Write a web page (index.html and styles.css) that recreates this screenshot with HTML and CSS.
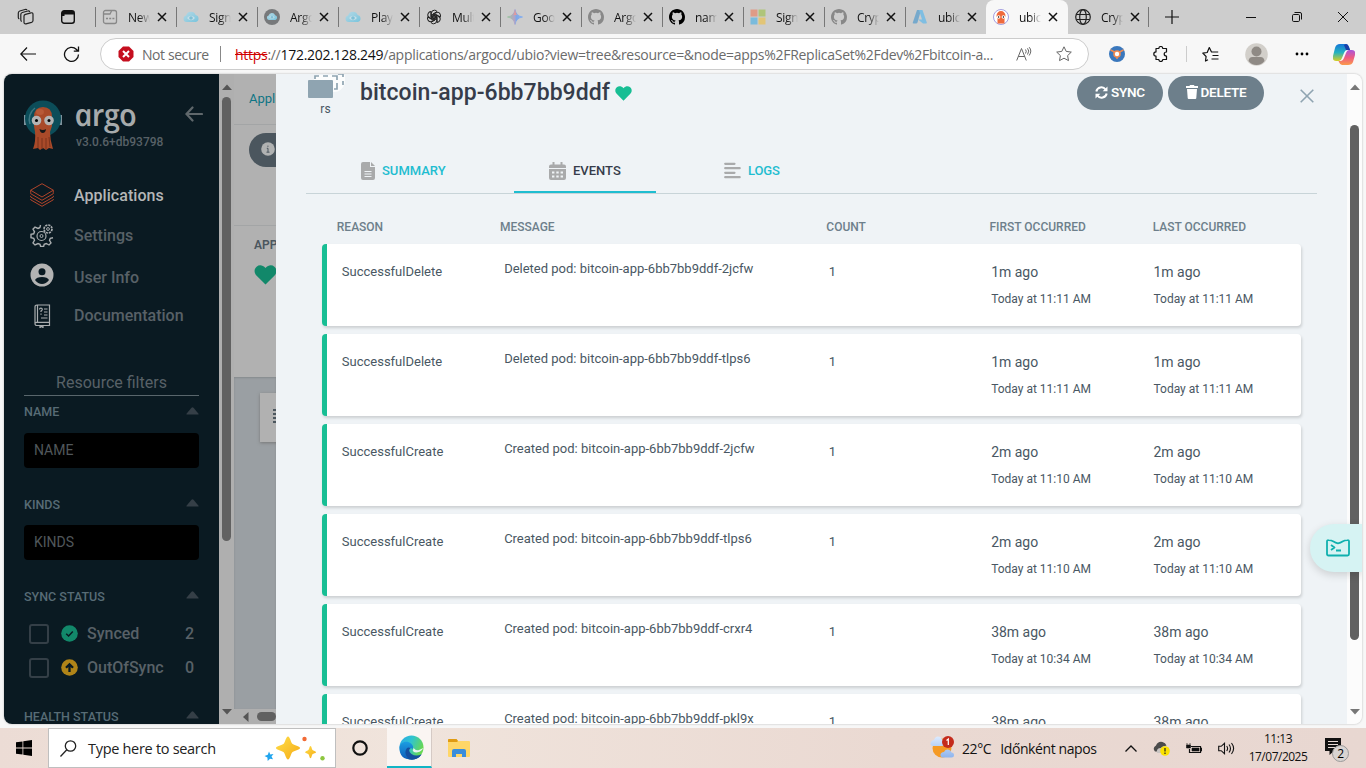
FILE: index.html
```html
<!DOCTYPE html>
<html lang="en">
<head>
<meta charset="utf-8">
<title>ubio - Argo CD</title>
<link rel="stylesheet" href="styles.css">
</head>
<body>
<svg class="defs" aria-hidden="true">
  <defs>
    <linearGradient id="cloudG" x1="0" y1="0" x2="1" y2="1"><stop offset="0" stop-color="#b5d9e6"/><stop offset="1" stop-color="#79c4dc"/></linearGradient>
    <linearGradient id="gem" x1="0" y1="0" x2="1" y2="0"><stop offset="0" stop-color="#9cc6a0"/><stop offset=".45" stop-color="#b3a4c4"/><stop offset=".6" stop-color="#7fa8e8"/><stop offset="1" stop-color="#88b0ee"/></linearGradient>
    <linearGradient id="star" x1="0" y1="0" x2="1" y2="1"><stop offset="0" stop-color="#ffdf4a"/><stop offset="1" stop-color="#f5ab16"/></linearGradient>
    <linearGradient id="edgeA" x1="0" y1="0" x2="1" y2=".4"><stop offset="0" stop-color="#2aa7e8"/><stop offset=".5" stop-color="#30c4cf"/><stop offset="1" stop-color="#67d852"/></linearGradient>
    <linearGradient id="edgeB" x1="0" y1="0" x2="0" y2="1"><stop offset="0" stop-color="#1b9de2"/><stop offset="1" stop-color="#0f5cb8"/></linearGradient>
    <linearGradient id="copA" x1="0" y1="0" x2="0" y2="1"><stop offset="0" stop-color="#1576d8"/><stop offset=".5" stop-color="#24b2c0"/><stop offset="1" stop-color="#d8cf22"/></linearGradient>
    <linearGradient id="copB" x1="0" y1="0" x2="0" y2="1"><stop offset="0" stop-color="#a855dc"/><stop offset=".5" stop-color="#ee5a83"/><stop offset="1" stop-color="#fb9b4a"/></linearGradient>
    <linearGradient id="cloudW" x1="0" y1="0" x2="0" y2="1"><stop offset="0" stop-color="#dcebff"/><stop offset="1" stop-color="#8fb5ee"/></linearGradient>
    <symbol id="x" viewBox="0 0 10 10"><path d="M1 1l8 8M9 1L1 9" stroke="#111" stroke-width="1.500" fill="none"/></symbol>
    <symbol id="cloud" viewBox="0 0 16 16"><path d="M3.500 13a3.300 3.300 0 0 1-.4-6.500A5 5 0 0 1 12.600 6a3.600 3.600 0 0 1 .3 7z" fill="url(#cloudG)"/><path d="M4 9q4-4.500 8 0q-4 4.500-8 0z" fill="#c5dfe8"/><circle cx="8" cy="9" r="1.800" fill="#7fc0d6"/></symbol>
    <symbol id="github" viewBox="0 0 16 16"><path d="M8 0C3.580 0 0 3.580 0 8c0 3.540 2.290 6.530 5.470 7.590.4.070.55-.17.55-.38 0-.19-.01-.82-.01-1.490-2.010.37-2.530-.49-2.690-.94-.09-.23-.48-.94-.82-1.130-.28-.15-.68-.52-.01-.53.63-.01 1.080.58 1.230.82.72 1.210 1.870.87 2.330.66.070-.52.28-.87.51-1.070-1.780-.2-3.640-.89-3.640-3.950 0-.87.31-1.590.82-2.150-.08-.2-.36-1.020.08-2.120 0 0 .67-.21 2.200.82a7.700 7.700 0 0 1 4 0c1.530-1.040 2.200-.82 2.200-.82.44 1.100.16 1.920.08 2.120.51.56.82 1.270.82 2.150 0 3.070-1.870 3.750-3.650 3.950.29.25.54.73.54 1.480 0 1.070-.01 1.930-.01 2.200 0 .21.15.46.55.38A8 8 0 0 0 16 8c0-4.420-3.580-8-8-8z"/></symbol>
    <symbol id="caret" viewBox="0 0 13 8"><path d="M1 7.500h11q1 0 .3-.9L7.500.8q-1-1-2 0L.7 6.600q-.7.900.3.900z"/></symbol>
    <symbol id="heart" viewBox="0 0 24 22"><path d="M12 21.500L2 11.500C-.8 8.500-.6 4 2.200 1.800 5-.4 9-.1 12 3.200c3-3.300 7-3.600 9.800-1.400C24.600 4 24.800 8.500 22 11.500z"/></symbol>
  </defs>
</svg>
<div class="browser">
  <div class="tabs">
    <div class="tabtools">
      <svg width="18" height="18" viewBox="0 0 18 18" fill="none" stroke="#222" stroke-width="1.200"><path d="M8.500 6.300l5.500-1.500q2-.3 2 1.600v6q0 1.500-1.500 2l-5.500 1.500q-2 .3-2-1.600V8q0-1.300 1.500-1.700z"/><path d="M4.800 13.500q-1-.3-1-1.500V6.500q0-1.500 1.500-2l5.500-1.500q1.500-.3 2 .9M2.300 11q-1-.4-1-1.500V5q0-1.500 1.500-2L8 1.500q1.500-.4 2 .6"/></svg>
      <svg width="16" height="16" viewBox="0 0 16 16"><rect x="1.700" y="1.700" width="12.600" height="12.600" rx="2.500" fill="none" stroke="#111" stroke-width="1.400"/><path d="M2 2h12v3.500H2zM2 5h2.500v2H2z" fill="#111"/></svg>
    </div>
    <div class="tab"><svg class="fav" viewBox="0 0 16 16" fill="none" stroke="#888" stroke-width="1.300"><rect x="1.500" y="1.500" width="13" height="13" rx="2"/><path d="M1.500 5H8l1.500-3M4 9.500h2M7.200 9.500h2M10.400 9.500h2"/></svg><span>New</span><svg class="close"><use href="#x"/></svg></div>
    <div class="tab"><svg class="fav"><use href="#cloud"/></svg><span>Sign</span><svg class="close"><use href="#x"/></svg></div>
    <div class="tab"><svg class="fav" viewBox="0 0 16 16"><circle cx="8" cy="8" r="8" fill="#77797b"/><svg x="2.500" y="2" width="11" height="11"><use href="#cloud"/></svg></svg><span>Argo</span><svg class="close"><use href="#x"/></svg></div>
    <div class="tab"><svg class="fav"><use href="#cloud"/></svg><span>Play</span><svg class="close"><use href="#x"/></svg></div>
    <div class="tab"><svg class="fav" viewBox="0 0 16 16" fill="none" stroke="#222" stroke-width="1"><path id="petal" d="M5.400 9.500V4.200Q5.400 1.200 8.400 1.200q1.700 0 2.700 1.400L6.900 5v4.800"/><use href="#petal" transform="rotate(60 8 8)"/><use href="#petal" transform="rotate(120 8 8)"/><use href="#petal" transform="rotate(180 8 8)"/><use href="#petal" transform="rotate(240 8 8)"/><use href="#petal" transform="rotate(300 8 8)"/></svg><span>Mult</span><svg class="close"><use href="#x"/></svg></div>
    <div class="tab"><svg class="fav" viewBox="0 0 16 16"><path d="M8 .5Q9 7 15.500 8 9 9 8 15.500 7 9 .5 8 7 7 8 .5z" fill="url(#gem)" stroke="url(#gem)"/><path d="M8 .5Q8.500 4 10 6L6.500 6Q7.700 4 8 .5z" fill="#e39a9a"/></svg><span>Goo</span><svg class="close"><use href="#x"/></svg></div>
    <div class="tab"><svg class="fav grey"><use href="#github"/></svg><span>Argo</span><svg class="close"><use href="#x"/></svg></div>
    <div class="tab"><svg class="fav"><use href="#github"/></svg><span>nam</span><svg class="close"><use href="#x"/></svg></div>
    <div class="tab"><svg class="fav" viewBox="0 0 16 16"><path fill="#df9b86" d="M.5.500h7v7h-7z"/><path fill="#afc57a" d="M8.500.5h7v7h-7z"/><path fill="#7abbdc" d="M.5 8.500h7v7h-7z"/><path fill="#e2c577" d="M8.500 8.500h7v7h-7z"/></svg><span>Sign</span><svg class="close"><use href="#x"/></svg></div>
    <div class="tab"><svg class="fav grey"><use href="#github"/></svg><span>Cryp</span><svg class="close"><use href="#x"/></svg></div>
    <div class="tab"><svg class="fav" viewBox="0 0 16 16"><path d="M5 1h4L5.500 13.500q-.4 1-1.500 1H1.500q-1 0-.7-1z" fill="#76a9cc"/><path d="M7 1h3.500l4.300 12.500q.3 1-.7 1H11L6 10.500h4z" fill="#7fbee2"/></svg><span>ubic</span><svg class="close"><use href="#x"/></svg></div>
    <div class="tab active"><svg class="fav" viewBox="0 0 16 16"><circle cx="8" cy="8" r="7.500" fill="#fff" stroke="#8d86d8" stroke-width=".8"/><path d="M3.500 7a4.500 5 0 0 1 9 0l-1 3v4.500h-7V10z" fill="#ef6a3c"/><circle cx="5.600" cy="8" r="1.800" fill="#fff"/><circle cx="10.400" cy="8" r="1.800" fill="#fff"/><circle cx="5.600" cy="8" r=".7"/><circle cx="10.400" cy="8" r=".7"/></svg><span>ubic</span><svg class="close"><use href="#x"/></svg></div>
    <div class="tab"><svg class="fav" viewBox="0 0 16 16" fill="none" stroke="#222" stroke-width="1.200"><circle cx="8" cy="8" r="7.300"/><ellipse cx="8" cy="8" rx="3.300" ry="7.300"/><path d="M1.500 5.500h13M1.500 10.500h13"/></svg><span>Cryp</span><svg class="close"><use href="#x"/></svg></div>
    <svg class="plus" width="14" height="14" viewBox="0 0 14 14"><path d="M7 0v14M0 7h14" stroke="#111" stroke-width="1.200"/></svg>
    <div class="winbtns">
      <svg width="10" height="10" viewBox="0 0 10 10"><path d="M0 5.500h10" stroke="#111"/></svg>
      <svg width="10" height="10" viewBox="0 0 10 10" fill="none" stroke="#111"><rect x=".5" y="2.500" width="7" height="7" rx="1.200"/><path d="M2.500.5H8q1.500 0 1.500 1.500v5.500"/></svg>
      <svg width="10" height="10" viewBox="0 0 10 10"><path d="M0 0l10 10M10 0L0 10" stroke="#111"/></svg>
    </div>
  </div>
  <div class="toolbar">
    <svg class="back" width="16" height="14" viewBox="0 0 16 14" fill="none" stroke="#111" stroke-width="1.200"><path d="M7 .5L.8 7 7 13.500M.8 7H16"/></svg>
    <svg class="reload" width="17" height="17" viewBox="0 0 17 17" fill="none" stroke="#111" stroke-width="1.300"><path d="M15.500 8.500a7 7 0 1 1-2-5l1.500 1.500M15.500 .5v4.700h-4.700"/></svg>
    <div class="address">
      <svg width="16" height="16" viewBox="0 0 16 16"><path d="M5 .5h6L15.500 5v6L11 15.500H5L.5 11V5z" fill="#c50f1f"/><path d="M5 5l6 6M11 5l-6 6" stroke="#fff" stroke-width="2"/></svg>
      <span class="notsec">Not secure</span><i class="vsep"></i>
      <span class="url"><s>https</s>://<b>172.202.128.249</b>/applications/argocd/ubio?view=tree&amp;resource=&amp;node=apps%2FReplicaSet%2Fdev%2Fbitcoin-a...</span>
      <svg class="read" width="16" height="14" viewBox="0 0 16 14" fill="none" stroke="#666"><path d="M.7 13.500L5.500 1.500l4.800 12M2.300 9.500h6.400M9.500 2.500q1.500 1.500 0 4M11.500 1.300q2.500 2.500 0 6.200M13.200.2q3.200 3.600 0 8.300"/></svg>
      <svg width="16" height="16" viewBox="0 0 16 16" fill="none" stroke="#666"><path d="M8 .8l2.200 4.600 5.100.7-3.700 3.500.9 5L8 12.200l-4.500 2.400.9-5L.7 6.100l5.100-.7z" stroke-linejoin="round"/></svg>
    </div>
    <div class="tools">
      <svg width="16" height="16" viewBox="0 0 16 16"><circle cx="8" cy="8" r="8" fill="#3a78bd"/><path d="M1.500 4l5 2.500M14.500 4l-5 2.500M8 10.500V13" stroke="#f08a50" stroke-width="1.500"/><circle cx="8" cy="8" r="3.800" fill="#f08a50"/><circle cx="8" cy="8" r="2.200" fill="#fff"/></svg>
      <svg width="16" height="16" viewBox="0 0 16 16" fill="none" stroke="#111" stroke-width="1.200"><path d="M3 2.500h2.800q.2-2 2-2t2 2h3.700V6q-2.300 0-2.300 2t2.300 2v3.500h-3.700q-.2 2-2 2t-2-2H3v-3.300Q.8 10 .8 8T3 5.900z" stroke-linejoin="round"/></svg>
      <i class="vsep light"></i>
      <svg width="17" height="16" viewBox="0 0 17 16" fill="none" stroke="#111" stroke-width="1.200"><path d="M6 13.800L3.500 15l.6-4.500L.8 7.200l4.400-.7L7.300 1.500 9.500 6h6.700M10.500 9.500h6M9.500 13h7" stroke-linejoin="round"/></svg>
      <svg width="23" height="23" viewBox="0 0 23 23"><circle cx="11.500" cy="11.500" r="11.300" fill="#d2cfca"/><circle cx="11.500" cy="8.500" r="5" fill="#8f8a85"/><path d="M3.500 18q.5-4 4-4h8q3.500 0 4 4-3 4-8 4t-8-4z" fill="#8f8a85"/></svg>
      <svg width="14" height="4" viewBox="0 0 14 4"><circle cx="2" cy="2" r="1.400"/><circle cx="7" cy="2" r="1.400"/><circle cx="12" cy="2" r="1.400"/></svg>
      <svg width="22" height="21" viewBox="0 0 22 21"><path d="M7 0h6q2 0 3 3l1 3h-3q-2 0-3 3l-2 5q-1 3-3 3H3q-4 0-3-5l2-8Q3 0 7 0z" fill="url(#copA)"/><path d="M13 0q2 0 3 3l1 3h-4L11 1z" fill="#193fa8"/><path d="M15 21H9q-2 0-3-3l-.5-1H8q2 0 3-3l2-5q1-3 3-3h3q4 0 3 5l-2 7q-1 3-5 3z" fill="url(#copB)"/></svg>
    </div>
  </div>

  <div class="viewport">
    <aside class="sidebar">
      <header class="brand">
        <svg class="octo" width="38" height="51" viewBox="0 0 38 51"><path d="M0 15h3v10H0zM35 15h3v10h-3z" fill="#7e929c"/><circle cx="19" cy="18.500" r="18" fill="#0c4d59"/><path d="M6 24a14 14 0 0 1 5-16" fill="none" stroke="#3d7681" stroke-width="1.500"/><path d="M10 17q0-10 9-10t9 10v9l-2 6q0 8 3 17l-4-1-3 2-3-2-3 2-2-2-5 1q3-8 2-17l-1-6z" fill="#a94a29"/><path d="M14 37v11M18 38v11M22 38v11M25 37l1 10" stroke="#7d331c" stroke-width="1"/><ellipse cx="16" cy="12" rx="4" ry="3" fill="#b85a38"/><circle cx="12.500" cy="20.500" r="4.800" fill="#b3b3b3"/><circle cx="25" cy="20.500" r="4.800" fill="#b3b3b3"/><circle cx="12.500" cy="20.500" r="1.500"/><circle cx="25" cy="20.500" r="1.500"/><path d="M15.500 29q3.500 2 6.500 0-.5 4-3.200 4t-3.300-4z" fill="#181818"/></svg>
        <div class="brandtext"><div class="argo">argo</div><div class="ver">v3.0.6+db93798</div></div>
        <svg class="collapse" width="18" height="16" viewBox="0 0 18 16" fill="none" stroke="#5f676b" stroke-width="2.200" stroke-linecap="round"><path d="M7.500 1.500L1.500 8l6 6.500M2 8h15"/></svg>
      </header>
      <nav>
        <a class="on n1"><svg width="24" height="24" viewBox="0 0 24 24" fill="none" stroke="#b0452b" stroke-width="1"><path d="M12 .7l11.300 6.500L12 14 .7 7.200zM.7 9.500v1.200L12 17.300l11.300-6.600V9.500M.7 12.800v1.200L12 20.500l11.300-6.500v-1.200M.7 16v.8L12 23.300l11.300-6.500V16M.7 7.200v2.300M23.300 7.200v2.300"/></svg>Applications</a>
        <a class="n2"><svg width="24" height="24" viewBox="0 0 24 24" fill="none" stroke="#a9adaf" stroke-width="1.400"><path d="M10 4.500l.5-2.500M10 4.500l-2 1-3-1.500L3 6.200l1.500 2.600-.8 2-2.700.5v3.400l2.700.6.8 2L3 20l2 2 3-1.500 2 .8.600 2.200h3l.6-2.200 2-.8L19 22l2-2-1.500-2.700.8-2 2.700-.6"/><circle cx="11.500" cy="13" r="4.500" stroke-width="1.200"/><circle cx="11.500" cy="13" r="1.500" stroke-width="1"/><circle cx="18" cy="6" r="4" stroke-dasharray="2.200 .9" stroke-width="1.700"/><circle cx="18" cy="6" r="1.400" stroke-width="1"/></svg>Settings</a>
        <a class="n3"><svg width="24" height="24" viewBox="0 0 24 24"><circle cx="12" cy="12" r="11.500" fill="#b3b3b3"/><circle cx="12" cy="8.800" r="3.500" fill="#0a1a22"/><path d="M5 17q1.500-3 7-3t7 3q-3 4-7 4t-7-4z" fill="#0a1a22"/></svg>User Info</a>
        <a class="n4"><svg width="24" height="24" viewBox="0 0 24 24" fill="none" stroke="#a9adaf" stroke-width="1.200"><path d="M5 3q0-2 2-2h12.500v20.500H7q-2 0-2-1.800V3M5 19.500q0-1.200 1.500-1.200h13M7.500 1v17M10 21v2.500l1.500-1 1.500 1V21M14 5h3.500M14 8h3.500M14 11h3.500M11 14h6.500"/><path d="M9.500 5.500q0-1.300 1.400-1.300T12.300 5.600q0 .8-1.300 1.400v1M11 9.500v1.200"/></svg>Documentation</a>
      </nav>
      <div class="rf">Resource filters</div>
      <div class="fh f1">NAME<svg><use href="#caret"/></svg></div>
      <div class="inp">NAME</div>
      <div class="fh f2">KINDS<svg><use href="#caret"/></svg></div>
      <div class="inp">KINDS</div>
      <div class="fh f3">SYNC STATUS<svg><use href="#caret"/></svg></div>
      <div class="chk"><i></i><svg width="17" height="17" viewBox="0 0 17 17"><circle cx="8.500" cy="8.500" r="8.300" fill="#12886a"/><path d="M5.200 8.700l2.400 2.300 4.200-4.500" fill="none" stroke="#0a1a22" stroke-width="1.500"/></svg><span>Synced</span><b>2</b></div>
      <div class="chk"><i></i><svg width="17" height="17" viewBox="0 0 17 17"><circle cx="8.500" cy="8.500" r="8.300" fill="#b08418"/><path d="M8.500 13v-7.500M5 8.800l3.500-3.500L12 8.800" fill="none" stroke="#0a1a22" stroke-width="2.300"/></svg><span>OutOfSync</span><b>0</b></div>
      <div class="fh f4">HEALTH STATUS<svg><use href="#caret"/></svg></div>
    </aside>
    <div class="sb left"><svg width="10" height="6" viewBox="0 0 10 6"><path d="M0 6l5-5.500L10 6z"/></svg><i></i><svg class="dn" width="10" height="6" viewBox="0 0 10 6"><path d="M0 0l5 5.500L10 0z"/></svg></div>
    <main class="under">
      <div class="crumb">Appli</div>
      <div class="bar"><div class="pill"><svg width="14" height="14" viewBox="0 0 14 14"><circle cx="7" cy="7" r="6.800" fill="#b0b2b2"/><path d="M5.800 6.300H7v3.700M5.500 10.200h3M6.300 4.200h1.200" stroke="#4b565e" stroke-width="1" fill="none"/></svg></div></div>
      <div class="health"><span>APP</span><svg width="23" height="20"><use href="#heart"/></svg></div>
      <div class="tree"><div class="box"><i></i><i></i><i></i><i></i></div></div>
      <div class="hsb"><svg width="6" height="10" viewBox="0 0 6 10"><path d="M5.500 0v10L0 5z" fill="#555"/></svg><i></i></div>
    </main>
    <section class="panel">
      <div class="titlebar">
        <div class="kind"><svg width="37" height="24" viewBox="0 0 37 24"><path d="M6 1h31v8q-3 9-11 9H6z" fill="#fff" opacity=".8"/><path d="M7 5V2h4M15 2h5M24 2h5v4M29 9v6h-3M30 0h5v3M35 7v4" fill="none" stroke="#8fa4b1" stroke-width="1.700"/><rect y="6" width="25" height="18" rx="1" fill="#8fa4b1"/></svg><span>rs</span></div>
        <h1>bitcoin-app-6bb7bb9ddf</h1><svg class="hh" width="17" height="15"><use href="#heart"/></svg>
        <div class="btns">
          <button class="sync"><svg width="13" height="13" viewBox="0 0 13 13" fill="none" stroke="#fff" stroke-width="2"><path d="M1.300 5.500A5.200 5.200 0 0 1 10.600 3.500M11.700 7.500A5.200 5.200 0 0 1 2.400 9.500"/><path d="M12.500.5v4.800H7.700zM.5 12.500V7.700h4.800z" fill="#fff" stroke="none"/></svg>SYNC</button>
          <button class="del"><svg width="12" height="14" viewBox="0 0 12 14" fill="#fff"><path d="M0 1h3.500L4 0h4l.5 1H12v2H0zM1 4h10l-.7 9q0 1-1 1H2.700q-1 0-1-1z"/></svg>DELETE</button>
        </div>
        <svg class="xx" width="14" height="14" viewBox="0 0 14 14"><path d="M.7.7l12.600 12.600M13.300.7L.7 13.300" stroke="#8fa4b1" stroke-width="1.600"/></svg>
      </div>
      <div class="ptabs">
        <a class="p1"><svg width="14" height="18" viewBox="0 0 14 18"><path d="M2 0h7v5h5v11q0 2-2 2H2q-2 0-2-2V2q0-2 2-2zM10 0l4 4h-4z" fill="#a9aaab"/><path d="M3.500 9.500h7M3.500 12h7M3.500 14.500h7" stroke="#eff3f6"/></svg>SUMMARY</a>
        <a class="p2"><svg width="17" height="18" viewBox="0 0 17 18"><path d="M3.500 0h2v2.500h6V0h2v2.500H15q2 0 2 2V6H0V4.500q0-2 2-2h1.500zM0 7h17v9q0 2-2 2H2q-2 0-2-2z" fill="#a9aaab"/><path d="M3 9.500h2.400v2H3zM7.300 9.500h2.400v2H7.300zM11.600 9.500H14v2h-2.400zM3 13.500h2.400v2H3zM7.300 13.500h2.400v2H7.300zM11.600 13.500H14v2h-2.400z" fill="#eff3f6"/></svg>EVENTS</a>
        <a class="p3"><svg width="17" height="17" viewBox="0 0 17 17"><path d="M1.200 1.800h9.300M1.200 6.200h14.500M1.200 10.800h9.300M1.200 15.200h14.500" stroke="#a9aaab" stroke-width="2.200" stroke-linecap="round"/></svg>LOGS</a>
      </div>
      <div class="table">
        <div class="row head"><span>REASON</span><span>MESSAGE</span><span>COUNT</span><span>FIRST OCCURRED</span><span>LAST OCCURRED</span></div>
        <div class="row card"><span class="r">SuccessfulDelete</span><span class="m">Deleted pod: bitcoin-app-6bb7bb9ddf-2jcfw</span><span class="r">1</span><span class="t">1m ago<small>Today at 11:11 AM</small></span><span class="t">1m ago<small>Today at 11:11 AM</small></span></div>
        <div class="row card"><span class="r">SuccessfulDelete</span><span class="m">Deleted pod: bitcoin-app-6bb7bb9ddf-tlps6</span><span class="r">1</span><span class="t">1m ago<small>Today at 11:11 AM</small></span><span class="t">1m ago<small>Today at 11:11 AM</small></span></div>
        <div class="row card"><span class="r">SuccessfulCreate</span><span class="m">Created pod: bitcoin-app-6bb7bb9ddf-2jcfw</span><span class="r">1</span><span class="t">2m ago<small>Today at 11:10 AM</small></span><span class="t">2m ago<small>Today at 11:10 AM</small></span></div>
        <div class="row card"><span class="r">SuccessfulCreate</span><span class="m">Created pod: bitcoin-app-6bb7bb9ddf-tlps6</span><span class="r">1</span><span class="t">2m ago<small>Today at 11:10 AM</small></span><span class="t">2m ago<small>Today at 11:10 AM</small></span></div>
        <div class="row card"><span class="r">SuccessfulCreate</span><span class="m">Created pod: bitcoin-app-6bb7bb9ddf-crxr4</span><span class="r">1</span><span class="t">38m ago<small>Today at 10:34 AM</small></span><span class="t">38m ago<small>Today at 10:34 AM</small></span></div>
        <div class="row card"><span class="r">SuccessfulCreate</span><span class="m">Created pod: bitcoin-app-6bb7bb9ddf-pkl9x</span><span class="r">1</span><span class="t">38m ago</span><span class="t">38m ago</span></div>
      </div>
    </section>
    <div class="sb right"><svg width="10" height="6" viewBox="0 0 10 6"><path d="M0 6l5-5.500L10 6z"/></svg><i></i><svg class="dn" width="10" height="6" viewBox="0 0 10 6"><path d="M0 0l5 5.500L10 0z"/></svg></div>
    <div class="float"><svg width="24" height="18" viewBox="0 0 24 18" fill="none" stroke="#0fb0ae" stroke-width="1.800" stroke-linejoin="round"><path d="M1 2.500Q1 1 2.500 1.200q3 .1 5 1.400t4.500 1.700q2.500-.4 4.500-1.700t5-1.400Q23 1 23 2.500v12.500q0 1.500-1.500 1.500h-19Q1 16.500 1 15zM5 6l3.500 2.500L5 11M10 11.500h5"/></svg></div>
  </div>

  <footer class="taskbar">
    <div class="start"><svg width="16" height="16" viewBox="0 0 16 16"><path d="M0 2.300l6.500-.9v6.100H0zM7.300 1.300L16 0v7.500H7.300zM0 8.400h6.500v6.200L0 13.700zM7.300 8.400H16V16l-8.700-1.300z"/></svg></div>
    <div class="search">
      <svg width="17" height="17" viewBox="0 0 17 17" fill="none" stroke="#222" stroke-width="1.300"><circle cx="10.500" cy="6" r="5.200"/><path d="M6.800 9.800L.5 16.500"/></svg>
      <span>Type here to search</span>
      <svg class="stars" width="62" height="25" viewBox="0 0 62 25"><path d="M24 .5c2 0 2.800 5.700 4.300 7.200s7.700 2.300 7.700 4.300-6.200 2.800-7.700 4.300S26 23.500 24 23.500s-2.800-5.700-4.300-7.200S12 14 12 12s6.200-2.800 7.700-4.300S22 .5 24 .5z" fill="url(#star)"/><path d="M46.500 10c1 0 1.300 3.200 2 4s3.500 1.200 3.500 2.200-2.800 1.300-3.500 2-1 4-2 4-1.300-3.200-2-4-3.500-1.200-3.500-2 2.800-1.400 3.500-2.200 1-4 2-4z" fill="url(#star)"/><path d="M5 15.500l1.300 3 3.200-.5-2 2.500 1.500 2.800-3-.6-2.300 2.300-.3-3.500L.5 20l3.300-1.200z" fill="#21a5ee"/><circle cx="40.500" cy="3" r="2.200" fill="#f26a35"/><circle cx="58.500" cy="22.300" r="2.200" fill="#8dc63f"/></svg>
    </div>
    <div class="cort"><svg width="16" height="16" viewBox="0 0 16 16"><circle cx="8" cy="8" r="6.700" fill="none" stroke="#111" stroke-width="2.200"/></svg></div>
    <div class="edge"><svg width="25" height="25" viewBox="0 0 25 25"><circle cx="12.500" cy="12.500" r="12" fill="url(#edgeA)"/><path d="M.5 13C.5 7 8 5 12 8.500 14 10 14.500 12 14 14c-3-2-6 1-4 5 2 3.500 8 4 12.500.5Q19 24.500 12.500 24.500.5 24.500.5 13z" fill="url(#edgeB)"/><path d="M8 13q-4 5 2 11.300Q18 26 22.700 19.200 17 22 12.500 19q-4-3-1-6-2-1-3.500 0z" fill="#154f9f"/><path d="M13.800 12.500q1.500 1-.1 3 .8 2.500 5 1.800 4-.7 5.600-4.300L20 15q-3 1-6.200-2.500z" fill="#e9f3f3"/></svg></div>
    <div class="files"><svg width="22" height="19" viewBox="0 0 22 19"><path d="M0 1q0-1 1-1h7.500l1.500 2H21q1 0 1 1v14q0 1-1 1H1q-1 0-1-1z" fill="#ffd667"/><path d="M0 1q0-1 1-1h7.500l1.500 2-1 1H0z" fill="#e09b12"/><path d="M4 18v-6q0-2 2-2h10q2 0 2 2v6h-4v-3H8v3z" fill="#3a8ddb"/></svg></div>
    <div class="weather"><svg width="26" height="24" viewBox="0 0 26 24"><circle cx="12" cy="12" r="9.500" fill="#f59a25"/><path d="M3 10q-3-.5-2.500-3.500Q1.500 4 4 4q1-3.500 4-3.500t4 3q2.500 0 2.500 3T12 10zM13 21.500q-3-.5-2.500-3T14 16q1-3 4-2.500t3.500 3q2.500 0 2.500 2.500t-2.500 2.500z" fill="url(#cloudW)"/><circle cx="18" cy="6" r="6" fill="#c42b1c"/><path d="M16.500 4.500L18.300 3v6" stroke="#fff" stroke-width="1.200" fill="none"/></svg><span>22°C</span><span>Időnként napos</span></div>
    <div class="tray">
      <svg width="12" height="7" viewBox="0 0 12 7"><path d="M.5 6.500L6 1l5.500 5.500" fill="none" stroke="#111" stroke-width="1.300"/></svg>
      <svg width="17" height="15" viewBox="0 0 17 15"><path d="M2 10.500Q-1 7 3 4.500 5 0 9.500 1q3 .5 4 3.500l-4 1.500-4 4.500z" fill="#4b4b4b"/><path d="M4 12q-1-5 4-5 2-3 5-1l2 3-4 3z" fill="#c9c5c3"/><circle cx="12" cy="10" r="4.800" fill="#fbe200"/><path d="M12 7v3.500M12 11.500v1.500" stroke="#222" stroke-width="1.200"/></svg>
      <svg width="16" height="11" viewBox="0 0 16 11"><path d="M5 3.500h9.500v6h-11V6" fill="none" stroke="#111" stroke-width="1.200"/><path d="M6 5h7v3H6zM15 5h1v3h-1zM.5 2h4v3h-4zM1 0v2M4 0v2" fill="#111" stroke="#111" stroke-width=".6"/></svg>
      <svg width="17" height="13" viewBox="0 0 17 13" fill="none" stroke="#111" stroke-width="1.100"><path d="M.7 4.300h2.500L6.500 1.300v10.400L3.200 8.700H.7zM8.700 4q1.800 2.500 0 5M11 2.500q3 4 0 8M13.500 1q4.200 5.500 0 11"/></svg>
    </div>
    <div class="clock"><span>11:13</span><span>17/07/2025</span></div>
    <div class="notif"><svg width="25" height="24" viewBox="0 0 25 24"><path d="M0 0h16v13H9l-4.500 4v-4H0z" fill="#111"/><path d="M3 3.500h10M3 6.500h10M3 9.500h8" stroke="#e7d9d4" stroke-width="1.200"/><circle cx="15.500" cy="15.500" r="8" fill="#d9d4d2" stroke="#999"/><text x="12.200" y="19.800" class="ntext">2</text></svg></div>
  </footer>
</div>
</body>
</html>
```
FILE: styles.css
```css
* { box-sizing: border-box; }
body { margin: 0; font-family: Roboto, "Liberation Sans", sans-serif; overflow: hidden; }
.defs { position: absolute; width: 0; height: 0; }
svg { flex: none; display: block; }
.browser { width: 1366px; height: 768px; background: #f7f7f7; display: flex; flex-direction: column; overflow: hidden; }

/* tab strip */
.tabs { height: 34px; background: #cdcdcd; display: flex; align-items: center; font: 12px "Open Sans", sans-serif; color: #111; flex: none; }
.tabtools { width: 95px; padding-left: 17px; display: flex; gap: 25px; align-items: center; flex: none; }
.tab { width: 81px; height: 34px; padding-left: 7px; display: flex; align-items: center; flex: none; background: linear-gradient(#777, #777) 0 7px / 1px 20px no-repeat; }
.tab span { margin-left: 10px; width: 22px; letter-spacing: -.3px; overflow: hidden; white-space: nowrap; -webkit-mask-image: linear-gradient(90deg, #000 50%, transparent); mask-image: linear-gradient(90deg, #000 50%, transparent); }
.tab .fav { width: 16px; height: 16px; }
.grey { fill: #888; }
.close { width: 10px; height: 10px; margin-left: 7px; }
.tab.active { width: 82px; background: #f7f7f7; border-radius: 8px 8px 0 0; }
.tab.active + .tab { background: linear-gradient(#777, #777) 100% 7px / 1px 20px no-repeat; }
.plus { margin-left: 16px; }
.winbtns { margin-left: auto; padding-right: 18px; display: flex; gap: 36px; }

/* address row */
.toolbar { height: 40px; display: flex; align-items: center; padding-left: 20px; flex: none; font-family: "Open Sans", sans-serif; }
.reload { margin-left: 27px; }
.address { margin-left: 20px; width: 989px; height: 32px; border: 1px solid #ccc; border-radius: 16px; background: #fff; display: flex; align-items: center; padding: 0 16px 0 17px; font-size: 14px; color: #6b6b6b; }
.notsec { margin-left: 8px; width: 67px; white-space: nowrap; letter-spacing: -.42px; }
.vsep { width: 1px; height: 16px; background: #888; margin-left: 11px; }
.url { margin-left: 14px; white-space: nowrap; letter-spacing: -.286px; }
.url s { color: #d00000; }
.url b { color: #111; font-weight: 400; }
.read { margin-left: auto; margin-right: 24px; }
.tools { display: flex; align-items: center; margin-left: 20px; }
.tools svg:nth-of-type(2) { margin-left: 28px; }
.vsep.light { background: #ccc; margin-left: 17px; margin-right: 15px; }
.tools svg:nth-of-type(4) { margin-left: 26px; }
.tools svg:nth-of-type(5) { margin-left: 27px; }
.tools svg:nth-of-type(6) { margin-left: 24px; }

/* page */
.viewport { position: relative; margin-left: 4px; width: 1358px; height: 650px; border-radius: 8px; overflow: hidden; display: flex; flex: none; box-shadow: 0 0 2px #aaa; }
.sidebar { width: 215px; background: #0a1a22; padding: 0 20px; color: #586167; flex: none; height: 650px; overflow: hidden; }
.brand { height: 101px; padding-top: 26px; display: flex; }
.brandtext { margin-left: 14px; width: 88px; }
/* upright italic gives the wordmark its single-storey letters */
.argo { width: 60px; font: italic 600 31px/36px "Open Sans", sans-serif; color: #a7abac; margin-top: -4px; height: 38px; transform: skewX(12deg); transform-origin: 0 75%; letter-spacing: -.9px; }
.ver { font-size: 12px; font-weight: 500; line-height: 16px; white-space: nowrap; }
.collapse { margin: 6px 0 0 22px; }
nav a { display: flex; align-items: center; gap: 20px; padding-left: 6px; font-size: 16px; font-weight: 500; }
nav .on { color: #b4b6b7; letter-spacing: .05px; }
.n1 { height: 41px; }
.n1 svg { margin-top: -1px; }
.n2 { height: 39px; }
.n2 svg { margin-top: -2px; }
.n3 { height: 45px; }
.n3 svg { margin-top: -5px; }
.n4 { height: 31px; }
.rf { margin-top: 40px; height: 25px; line-height: 24px; font-size: 16px; text-align: center; border-bottom: 1px solid #59666c; }
.fh { height: 30px; display: flex; justify-content: space-between; align-items: center; font-size: 12.500px; font-weight: 500; color: #586c76; }
.fh svg { width: 13px; height: 8px; margin-top: -2px; fill: #353f47; }
.f1 { height: 31px; }
.inp { margin-top: 6px; height: 35px; border-radius: 4px; background: #000; padding-left: 10px; font-size: 14px; line-height: 35px; color: #50575b; }
.f2, .f3 { margin-top: 21px; }
.f3 { margin-bottom: 5px; }
.f4 { margin-top: 17px; }
.chk { height: 34px; display: flex; align-items: center; padding: 0 5px; font-size: 16px; font-weight: 500; }
.chk i { width: 20px; height: 20px; border: 2px solid #343f47; border-radius: 3px; margin: 2px 12px 0 0; }
.chk span { margin-left: 9px; }
.chk b { margin-left: auto; font-weight: 500; }
.sb { width: 15px; display: flex; flex-direction: column; align-items: center; padding: 10px 0 9px; background: #afafaf; flex: none; height: 650px; }
.sb svg { fill: #555; }
.sb i { width: 9px; height: 444px; border-radius: 5px; background: #616161; margin-top: 7px; }
.sb .dn { margin-top: auto; }
.under { width: 42px; overflow: hidden; background: #b1b1b1; flex: none; height: 650px; }
.crumb { height: 51px; border-bottom: 1px solid #a3a5a6; padding: 17px 0 0 15px; font-size: 13px; line-height: 16px; color: #0e7585; }
.bar { height: 101px; border-bottom: 1px solid #a3a5a6; padding: 8px 0 0 15px; }
.pill { width: 100px; height: 34px; border-radius: 17px; background: #4b565e; padding: 9px 12px; }
.health { height: 151px; padding: 11px 0 0 20px; white-space: nowrap; font-size: 12px; font-weight: 600; line-height: 16px; color: #4b565e; }
.health svg { margin-top: 12px; fill: #12886a; }
.tree { height: 332px; background: #9a9fa3; padding: 16px 0 0 26px; box-shadow: inset 0 1px 2px #85898c; }
.box { width: 60px; height: 49px; background: #b1b1b1; box-shadow: 0 1px 3px #777; padding: 16px 0 0 13px; }
.box i { display: block; height: 2px; margin-bottom: 2px; background: #4b565e; width: 15px; }
.hsb { height: 15px; display: flex; align-items: center; padding-left: 9px; gap: 8px; background: #afafaf; }
.hsb i { width: 40px; height: 9px; border-radius: 5px; background: #616161; }

/* details panel */
.panel { width: 1071px; background: #eff3f6; height: 650px; overflow: hidden; flex: none; }
.titlebar { height: 72px; display: flex; padding-left: 32px; }
.kind { width: 52px; font-size: 12px; color: #495763; }
.kind span { display: block; width: 35px; text-align: center; line-height: 14px; margin-top: 4px; }
h1 { margin: 4px 0 0; font-size: 23px; font-weight: 500; line-height: 29px; color: #363c4a; white-space: nowrap; letter-spacing: .04px; }
.hh { margin: 12px 0 0 5px; fill: #18be94; }
.btns { margin-left: auto; display: flex; gap: 5px; padding-top: 2px; }
button { height: 34px; border: 0; border-radius: 17px; background: #6d7f8b; color: #fff; font: 600 13.500px Roboto, sans-serif; letter-spacing: -.25px; display: flex; align-items: center; justify-content: center; padding: 0 0 2px; gap: 3px; }
.sync { width: 86px; }
.del { width: 96px; }
.xx { margin: 15px 33px 0 36px; }
.ptabs { margin: 0 30px; height: 48px; border-bottom: 1px solid #c8d4d8; display: flex; font-size: 13px; font-weight: 500; color: #1fbdd0; }
.ptabs a { display: flex; align-items: center; height: 47px; padding-top: 2px; gap: 7px; }
.ptabs .p1 { width: 208px; padding-left: 55px; }
.ptabs .p2 { width: 142px; padding: 4px 0 0 35px; color: #363c4a; border-bottom: 2px solid #1fbdd0; }
.ptabs .p3 { padding-left: 68px; letter-spacing: -.1px; }
.table { margin: 17px 46px 0; }
.row { display: grid; grid-template-columns: 1fr 2fr 1fr 1fr 1fr; }
.row > span { padding-left: 14.800px; white-space: nowrap; }
.head { height: 33px; line-height: 32px; font-size: 12px; font-weight: 500; color: #6d7f8b; }
.card { height: 82px; margin-bottom: 8px; background: #fff; border-left: 5px solid #18be94; border-radius: 4px; box-shadow: 1px 2px 3px rgba(0,0,0,.15); color: #495763; font-size: 13px; }
.r { padding-top: 18px; line-height: 20px; }
.m { padding-top: 15px; line-height: 20px; }
.t { padding-top: 18px; line-height: 20px; font-size: 14px; }
.t small { display: block; font-size: 12px; margin-top: 7px; }
.right { background: #fcfcfc; }
.right svg { fill: #777; }
.right i { margin-top: 35px; height: 515px; }
.float { position: absolute; right: 0; top: 450px; width: 52px; height: 48px; border-radius: 24px 0 0 24px; background: #d6f3f3; padding: 15px 0 0 16px; box-shadow: 0 3px 8px rgba(0,0,0,.15); }

/* taskbar */
.taskbar { margin-top: 4px; height: 40px; flex: none; background: linear-gradient(90deg, #ecdcd5, #f0e4dc 30%, #ead9d2 65%, #e8d7d1); display: flex; align-items: center; font-family: "Open Sans", sans-serif; color: #111; }
.start { width: 48px; padding-left: 16px; }
.search { width: 288px; height: 40px; border: 1px solid #bfbfbf; background: #fff; display: flex; align-items: center; padding-left: 11px; font-size: 14.500px; color: #222; }
.search span { margin-left: 11px; letter-spacing: -.3px; white-space: nowrap; width: 132px; }
.stars { margin-left: 44px; }
.cort { width: 51px; padding-left: 16px; }
.edge { width: 45px; height: 40px; background: #faf5f2; border-bottom: 2px solid #12b5c5; border-right: 1px solid #d5cac5; padding: 7px 0 0 12px; }
.files { width: 48px; padding-left: 16px; }
.weather { margin-left: 450px; display: flex; align-items: center; font-size: 14px; white-space: nowrap; letter-spacing: -.4px; width: 195px; }
.weather span { margin-left: 6px; }
.weather span + span { margin-left: 9px; }
.tray { display: flex; align-items: center; gap: 16px; width: 111px; }
.clock { width: 70px; margin-left: 7px; display: flex; flex-direction: column; align-items: center; font-size: 12px; line-height: 18px; letter-spacing: -.5px; }
.notif { margin-left: 12px; padding-top: 4px; }
.ntext { font: 12px "Open Sans", sans-serif; }
```
